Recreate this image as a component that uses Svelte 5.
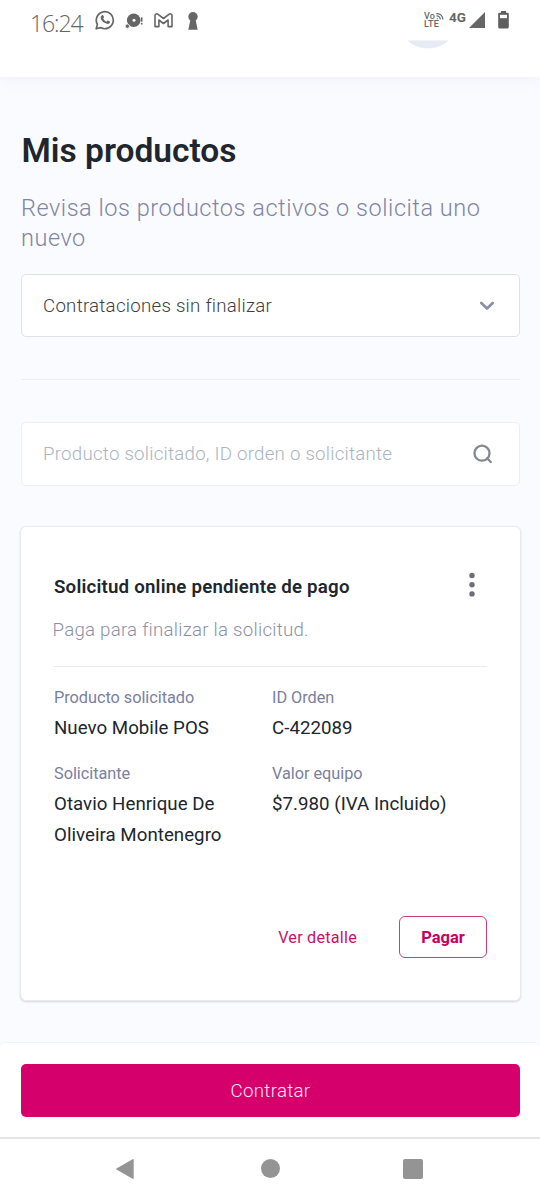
<script>
  const fields = [
    { label: 'Producto solicitado', value: 'Nuevo Mobile POS' },
    { label: 'ID Orden', value: 'C-422089' },
    { label: 'Solicitante', value: 'Otavio Henrique De Oliveira Montenegro' },
    { label: 'Valor equipo', value: '$7.980 (IVA Incluido)' },
  ];
</script>

<div class="screen">
  <header>
    <div class="status">
      <span class="time">16:24</span>
      <svg class="wa" width="20" height="20" viewBox="0 0 20 20" fill="none">
        <path d="M1.2 18.8 2.4 14.4A8.5 8.5 0 1 1 5.6 17.6Z" stroke="#666" stroke-width="1.7" stroke-linejoin="round" />
        <path d="M6.9 5.2c.6-.5 1.2-.3 1.4.2l.7 1.6c.2.5-.6 1.1-.8 1.5.8 1.6 1.8 2.5 3.4 3.2.5-.5.9-1.3 1.4-1.1l1.7.8c.5.3.3 1.1-.1 1.6-1.1 1.3-2.8 1-4.6.1-2-1-3.500-2.600-4.200-4.700-.4-1.200.1-2.400 1.100-3.200Z" fill="#666" />
      </svg>
      <svg class="disc" width="19" height="16" viewBox="0 0 19 16" fill="#666">
        <circle cx="8.700" cy="7.300" r="6.800" /><circle cx="9" cy="7.300" r="1.500" fill="#fff" />
        <circle cx="2.400" cy="13.200" r="2.100" stroke="#fff" stroke-width=".7" />
        <rect x="15.900" y="4.300" width="1.600" height="4.400" /><rect x="15.900" y="9.900" width="1.600" height="1.600" />
      </svg>
      <svg class="mail" width="19" height="15" viewBox="0 0 19 15" fill="none" stroke="#666" stroke-width="1.600" stroke-linejoin="round">
        <path d="M1 13.600V2.600C1 .8 2.900.4 4.100 1.300L9.500 5.500 14.900 1.300C16.100.4 18 .8 18 2.600V13.600H14.100V7L9.500 10.500 4.900 7V13.600Z" />
      </svg>
      <svg class="key" width="12" height="18" viewBox="0 0 12 18" fill="#666">
        <circle cx="6" cy="4.700" r="4.700" /><path d="M3.700 6.500h4.600l2.400 11.300H1.300Z" />
      </svg>
      <span class="spring"></span>
      <span class="volte"><span class="vo">Vo<svg width="8" height="7" viewBox="0 0 8 7" fill="none" stroke="#666" stroke-width="1.200"><path d="M.5.600A6 6 0 0 1 6.900 6.500M.5 3A3.400 3.400 0 0 1 4.300 6.500" /><circle cx="1.300" cy="5.700" r=".6" fill="#666" stroke="none" /></svg></span><span class="lte">LTE</span></span>
      <span class="net">4G</span>
      <svg class="signal" width="16" height="16" viewBox="0 0 16 16"><path d="M0 16 16 0V16Z" fill="#666" /></svg>
      <svg class="battery" width="11" height="18" viewBox="0 0 11 18">
        <path d="M3 0h5v1.800h1.500a1.300 1.300 0 0 1 1.300 1.300v13a1.300 1.300 0 0 1-1.300 1.300h-8A1.300 1.300 0 0 1 .2 16.100v-13a1.300 1.300 0 0 1 1.300-1.300H3Z" fill="#5e5e5e" /><path d="M2 3.800h7v3.400H2Z" fill="#fff" />
      </svg>
    </div>
    <svg class="avatar" width="42" height="9" viewBox="0 0 42 9"><path d="M.5.500H41.500C31 10.900 11 10.900.5.500Z" fill="#e6eaf5" /></svg>
  </header>

  <main>
    <h1>Mis productos</h1>
    <p class="intro">Revisa los productos activos o solicita uno nuevo</p>
    <div class="select">
      <span class="seltext">Contrataciones sin finalizar</span>
      <svg width="16" height="10" viewBox="0 0 16 10" fill="none"><path d="M2.300 2 8 7.400 13.700 2" stroke="#8a8fa3" stroke-width="2.700" stroke-linejoin="round" stroke-linecap="round" /></svg>
    </div>
    <hr />
    <div class="search">
      <span class="placeholder">Producto solicitado, ID orden o solicitante</span>
      <svg width="20" height="20" viewBox="0 0 20 20" fill="none" stroke="#83888f" stroke-width="2.300"><circle cx="9" cy="9.200" r="7.500" /><path d="m14.100 14.300 3.700 3.700" stroke-linecap="round" /></svg>
    </div>

    <article>
      <div class="heading">
        <h2>Solicitud online pendiente de pago</h2>
        <svg width="6" height="26" viewBox="0 0 6 26" fill="#6c6c7b"><circle cx="3" cy="3.500" r="2.700" /><circle cx="3" cy="12.700" r="2.700" /><circle cx="3" cy="21.900" r="2.700" /></svg>
      </div>
      <p class="note">Paga para finalizar la solicitud.</p>
      <dl>
        {#each fields as field}
          <div><dt>{field.label}</dt><dd>{field.value}</dd></div>
        {/each}
      </dl>
      <div class="actions">
        <span class="detail">Ver detalle</span>
        <button class="pay">Pagar</button>
      </div>
    </article>
  </main>

  <footer><button>Contratar</button></footer>
  <nav>
    <svg width="20" height="22" viewBox="0 0 20 22"><path d="M1.500 10.400 17.600 1.200Q18.700.7 18.700 1.900V20.100Q18.700 21.300 17.600 20.700L1.500 11.600Q.4 11 1.500 10.400Z" fill="#949494" /></svg>
    <i class="home"></i>
    <i class="recent"></i>
  </nav>
</div>

<style>
  :global(body) { background: #fff; }
  .screen { width: 540px; height: 1200px; display: flex; flex-direction: column; overflow: hidden; background: #fafbff; font-family: Roboto, sans-serif; color: #20262d; }
  * { box-sizing: border-box; }
  h1, h2, p, dl, dd, hr { margin: 0; }
  svg { display: block; flex: none; }
  button { font-family: inherit; padding: 0; }
  header { height: 77px; flex: none; background: #fff; box-shadow: 0 1px 14px rgba(70, 80, 120, .07); }
  .status { height: 40px; display: flex; align-items: flex-start; padding: 0 31px 0 30px; color: #666; }
  .time { width: 65px; font: 300 23px/30px "Open Sans", sans-serif; letter-spacing: -1.100px; padding-top: 8px; white-space: nowrap; }
  .wa { margin-top: 10px; }
  .disc { margin: 13px 0 0 10px; }
  .mail { margin: 13px 0 0 10px; }
  .key { margin: 12px 0 0 13.500px; }
  .spring { flex: 1; }
  .volte { display: flex; flex-direction: column; margin-top: 12px; width: 24px; font-weight: 500; }
  .vo { display: flex; align-items: center; gap: 1px; font-size: 9px; line-height: 8px; }
  .lte { font-size: 9px; line-height: 9px; letter-spacing: .2px; }
  .net { font-size: 13.500px; line-height: 14px; font-weight: 700; margin: 9.500px 3px 0 1px; }
  .signal { margin-top: 11.500px; }
  .battery { margin: 11px 0 0 13px; }
  .avatar { margin-left: 407px; }
  main { flex: 1; padding: 53px 20px 0 21px; }
  h1 { font-size: 33.500px; line-height: 42px; font-weight: 600; white-space: nowrap; padding-left: .5px; }
  .intro { margin-top: 21px; font-size: 23.500px; line-height: 30px; font-weight: 300; letter-spacing: .54px; color: #8085a3; }
  .select, .search { height: 63px; display: flex; align-items: center; justify-content: space-between; padding: 0 24px 0 21px; border: 1px solid #dfe1e9; border-radius: 5px; background: #fff; font-size: 18.700px; font-weight: 300; }
  .select { margin-top: 21px; color: #3c4045; }
  .seltext { letter-spacing: .25px; }
  hr { margin: 42px 0; height: 1px; border: 0; background: #eceef3; }
  .search { height: 64px; padding-right: 26.500px; border-color: #eceef3; color: #a9b4be; }
  .placeholder { letter-spacing: .24px; }
  article { margin: 40px -1px 0; height: 475px; padding: 46px 33px 0; border: 1px solid #e9ebf2; border-radius: 6px; background: #fff; box-shadow: 0 1px 2px rgba(30, 35, 50, .17); }
  .heading { display: flex; justify-content: space-between; height: 30px; padding-right: 12px; }
  .heading svg { margin-top: -1px; }
  h2 { font-size: 18.700px; line-height: 28px; font-weight: 600; letter-spacing: .2px; white-space: nowrap; }
  .note { margin-top: 14px; height: 50px; font-size: 18.700px; line-height: 26px; font-weight: 300; letter-spacing: .24px; color: #8b90a8; border-bottom: 1px solid #eaecf1; margin-left: -1.500px; }
  dl { display: grid; grid-template-columns: 218px 1fr; grid-template-rows: 76px 125px; padding-top: 18px; }
  dt { font-size: 16.300px; line-height: 26px; letter-spacing: -.03px; color: #7a80a0; }
  dd { margin-top: 2px; font-size: 18.700px; line-height: 31.400px; letter-spacing: .03px; width: 200px; }
  .actions { display: flex; justify-content: flex-end; align-items: center; margin-top: 30px; }
  .detail { font-size: 16.200px; color: #c9106c; letter-spacing: .23px; margin-right: 42px; }
  .pay { width: 88px; height: 42px; border: 1px solid #ce3c84; border-radius: 6px; background: #fff; color: #c6005f; font-size: 16.500px; font-weight: 700; }
  footer { height: 95px; flex: none; padding: 21px 20px 0 21px; background: #fff; border-top: 1px solid #f1f2f9; border-radius: 6px 6px 0 0; }
  footer button { display: block; width: 499px; height: 53px; border: 0; border-radius: 5px; background: #d6006d; color: #ffe6f4; font-size: 18.700px; font-weight: 300; letter-spacing: .3px; }
  nav { height: 63px; flex: none; display: flex; align-items: center; padding: 0 0 2px 115px; background: #fff; border-top: 2px solid #e4e4e6; }
  .home { width: 19px; height: 19px; border-radius: 50%; background: #949494; margin-left: 126px; }
  .recent { width: 20px; height: 20px; border-radius: 2px; background: #949494; margin-left: 123px; }
</style>
